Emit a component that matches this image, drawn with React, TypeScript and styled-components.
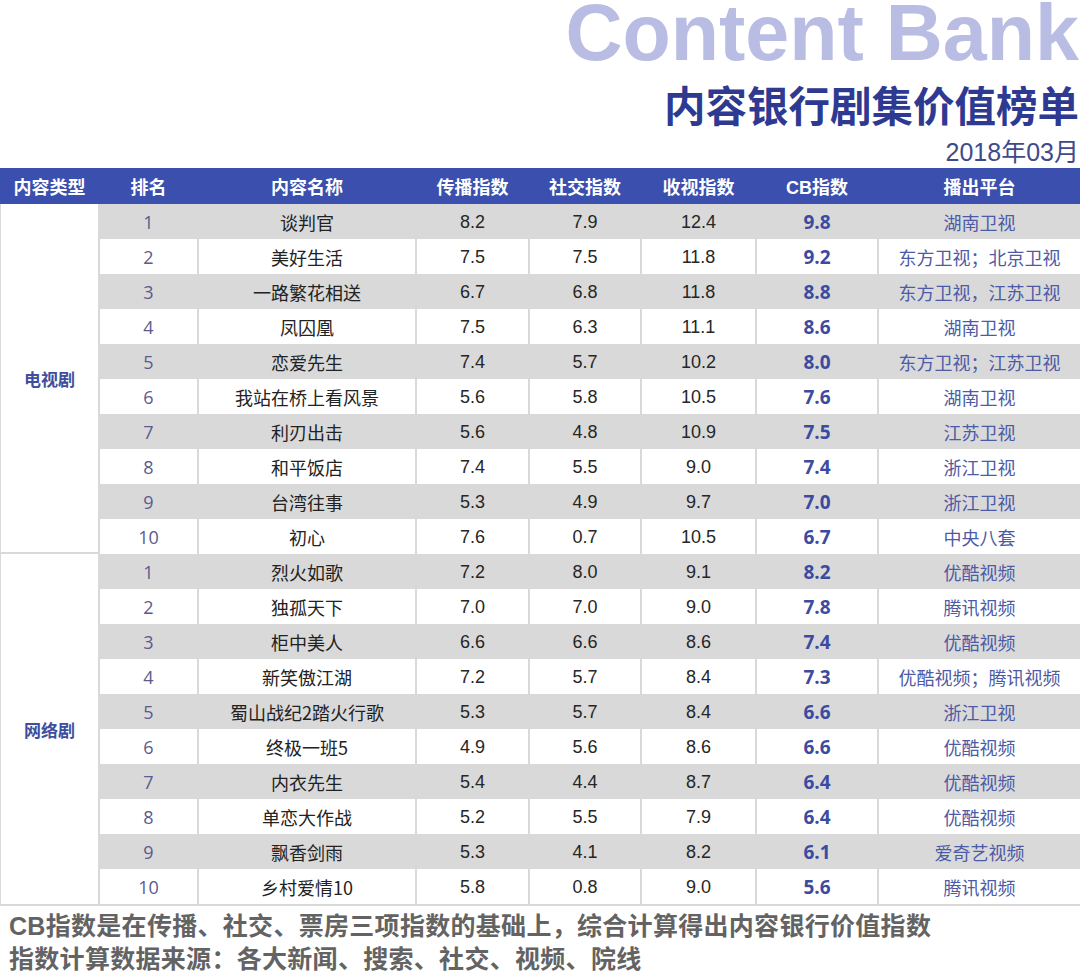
import React from 'react';
import styled, { createGlobalStyle, css } from 'styled-components';

const GlobalStyle = createGlobalStyle`
  html, body {
    margin: 0;
    padding: 0;
    background: #ffffff;
    overflow-x: hidden;
  }
  body {
    font-family: "Liberation Sans", "Noto Sans CJK SC", sans-serif;
  }
`;

const COLUMNS = '97px 97px 216px 111px 110px 113px 120px 1fr';
const GRAY = '#d9d9d9';

const Page = styled.div`
  width: 1080px;
  overflow: hidden;
`;

const Masthead = styled.header`
  display: flex;
  flex-direction: column;
  align-items: flex-end;
  padding-bottom: 1px;
`;

const BrandTitle = styled.div`
  font-family: "Liberation Sans", Arial, sans-serif;
  font-weight: 700;
  font-size: 79px;
  line-height: 66px;
  height: 66px;
  color: #b9bde3;
  white-space: nowrap;
  padding-right: 1px;
`;

const ChartTitle = styled.h1`
  margin: 14px 0 0;
  font-family: "Noto Sans CJK SC", sans-serif;
  font-weight: 700;
  font-size: 41.5px;
  line-height: 48px;
  color: #2e3a92;
  white-space: nowrap;
  padding-right: 1px;
`;

const DateLine = styled.div`
  margin-top: 9px;
  font-size: 25px;
  line-height: 30px;
  color: #3f4a8b;
  white-space: nowrap;
  padding-right: 1px;
`;

const HeaderRow = styled.div`
  display: grid;
  grid-template-columns: ${COLUMNS};
  column-gap: 2px;
  padding-left: 1px;
  height: 36px;
  background: #3a4fae;
`;

const HeaderCell = styled.div`
  display: flex;
  align-items: center;
  justify-content: center;
  color: #ffffff;
  font-weight: 700;
  font-size: 18px;
  white-space: nowrap;
`;

const Body = styled.div`
  background: ${GRAY};
  padding: 0 0 2px 1px;
`;

const Group = styled.div`
  display: grid;
  grid-template-columns: ${COLUMNS};
  grid-template-rows: repeat(10, 35px);
  column-gap: 2px;
`;

const CategoryCell = styled.div<{ $divider: boolean }>`
  grid-column: 1;
  grid-row: 1 / -1;
  display: flex;
  align-items: center;
  justify-content: center;
  background: #ffffff;
  box-sizing: border-box;
  border-bottom: ${p => (p.$divider ? `2px solid ${GRAY}` : 'none')};
  color: #3d4f9e;
  font-weight: 700;
  font-size: 17px;
`;

type Kind = 'rank' | 'name' | 'num' | 'cb' | 'platform';

const kindStyles: Record<Kind, ReturnType<typeof css>> = {
  rank: css`
    font-family: "Open Sans", "Liberation Sans", sans-serif;
    color: #5b5b8f;
  `,
  name: css`
    font-family: "Noto Sans CJK SC", sans-serif;
    color: #222222;
  `,
  num: css`
    color: #262626;
    padding-top: 1px;
  `,
  cb: css`
    font-family: "Open Sans", "Liberation Sans", sans-serif;
    font-weight: 700;
    font-size: 19px;
    color: #3b4ba0;
  `,
  platform: css`
    font-family: "Noto Sans CJK SC", sans-serif;
    color: #4d5ba6;
  `,
};

const Cell = styled.div<{ $shade: boolean; $kind: Kind }>`
  display: flex;
  align-items: center;
  justify-content: center;
  box-sizing: border-box;
  background: ${p => (p.$shade ? GRAY : '#ffffff')};
  font-size: 18px;
  white-space: nowrap;
  ${p => kindStyles[p.$kind]}
`;

const Footer = styled.footer`
  padding: 4px 0 0 9px;
  font-family: "Liberation Sans", "Noto Sans CJK SC", sans-serif;
  font-weight: 700;
  font-size: 25px;
  letter-spacing: 0.3px;
  line-height: 33px;
  color: #636363;
  white-space: nowrap;
`;

type Row = [string, string, string, string, string, string];

const groups: { name: string; rows: Row[] }[] = [
  {
    name: '电视剧',
    rows: [
      ['谈判官', '8.2', '7.9', '12.4', '9.8', '湖南卫视'],
      ['美好生活', '7.5', '7.5', '11.8', '9.2', '东方卫视；北京卫视'],
      ['一路繁花相送', '6.7', '6.8', '11.8', '8.8', '东方卫视，江苏卫视'],
      ['凤囚凰', '7.5', '6.3', '11.1', '8.6', '湖南卫视'],
      ['恋爱先生', '7.4', '5.7', '10.2', '8.0', '东方卫视；江苏卫视'],
      ['我站在桥上看风景', '5.6', '5.8', '10.5', '7.6', '湖南卫视'],
      ['利刃出击', '5.6', '4.8', '10.9', '7.5', '江苏卫视'],
      ['和平饭店', '7.4', '5.5', '9.0', '7.4', '浙江卫视'],
      ['台湾往事', '5.3', '4.9', '9.7', '7.0', '浙江卫视'],
      ['初心', '7.6', '0.7', '10.5', '6.7', '中央八套'],
    ],
  },
  {
    name: '网络剧',
    rows: [
      ['烈火如歌', '7.2', '8.0', '9.1', '8.2', '优酷视频'],
      ['独孤天下', '7.0', '7.0', '9.0', '7.8', '腾讯视频'],
      ['柜中美人', '6.6', '6.6', '8.6', '7.4', '优酷视频'],
      ['新笑傲江湖', '7.2', '5.7', '8.4', '7.3', '优酷视频；腾讯视频'],
      ['蜀山战纪2踏火行歌', '5.3', '5.7', '8.4', '6.6', '浙江卫视'],
      ['终极一班5', '4.9', '5.6', '8.6', '6.6', '优酷视频'],
      ['内衣先生', '5.4', '4.4', '8.7', '6.4', '优酷视频'],
      ['单恋大作战', '5.2', '5.5', '7.9', '6.4', '优酷视频'],
      ['飘香剑雨', '5.3', '4.1', '8.2', '6.1', '爱奇艺视频'],
      ['乡村爱情10', '5.8', '0.8', '9.0', '5.6', '腾讯视频'],
    ],
  },
];

const headers = ['内容类型', '排名', '内容名称', '传播指数', '社交指数', '收视指数', 'CB指数', '播出平台'];
const rowKinds: Kind[] = ['name', 'num', 'num', 'num', 'cb', 'platform'];

const App: React.FC = () => {
  return (
    <Page>
      <GlobalStyle />
      <Masthead>
        <BrandTitle>Content Bank</BrandTitle>
        <ChartTitle>内容银行剧集价值榜单</ChartTitle>
        <DateLine>2018年03月</DateLine>
      </Masthead>

      <HeaderRow>
        {headers.map(h => (
          <HeaderCell key={h}>{h}</HeaderCell>
        ))}
      </HeaderRow>

      <Body>
        {groups.map((group, gi) => (
          <Group key={group.name}>
            <CategoryCell $divider={gi < groups.length - 1}>{group.name}</CategoryCell>
            {group.rows.map((row, ri) => {
              const shade = ri % 2 === 0;
              return (
                <React.Fragment key={row[0]}>
                  <Cell $shade={shade} $kind="rank">{ri + 1}</Cell>
                  {row.map((value, ci) => (
                    <Cell key={ci} $shade={shade} $kind={rowKinds[ci]}>
                      {value}
                    </Cell>
                  ))}
                </React.Fragment>
              );
            })}
          </Group>
        ))}
      </Body>

      <Footer>
        <div>CB指数是在传播、社交、票房三项指数的基础上，综合计算得出内容银行价值指数</div>
        <div>指数计算数据来源：各大新闻、搜索、社交、视频、院线</div>
      </Footer>
    </Page>
  );
};

export default App;
